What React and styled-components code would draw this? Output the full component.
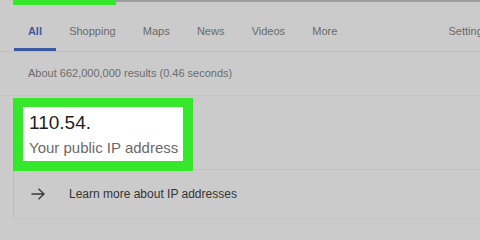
import React from "react";
import styled, { createGlobalStyle } from "styled-components";

const GlobalStyle = createGlobalStyle`
  html, body {
    margin: 0;
    padding: 0;
    background: #cbcbcb;
    overflow: hidden;
  }
  body {
    font-family: "Liberation Sans", Arial, sans-serif;
  }
`;

const Page = styled.div`
  width: 480px;
  height: 240px;
  background: #cbcbcb;
  overflow: hidden;
`;

const TopBar = styled.div`
  display: flex;
  height: 6px;
`;

const SearchHighlight = styled.div`
  margin-left: 13px;
  width: 103px;
  height: 5px;
  background: #35e82b;
`;

const SearchEdge = styled.div`
  flex: 1;
  height: 2px;
  background: #9d9d9d;
`;

const Tabs = styled.nav`
  display: flex;
  margin-top: 17px;
  padding-left: 14.3px;
  border-bottom: 1px solid #bfbfbf;
`;

const Tab = styled.div`
  padding: 0 13.6px 9px;
  font-size: 11px;
  line-height: 16px;
  color: ${({ $active }) => ($active ? "#3b5aa2" : "#6a6a6a")};
  font-weight: ${({ $active }) => ($active ? 700 : 400)};
  border-bottom: 3px solid ${({ $active }) => ($active ? "#3b5aa2" : "transparent")};
  white-space: nowrap;
  margin-left: ${({ $push }) => $push || 0};
`;

const Stats = styled.div`
  padding: 13px 0 0 28px;
  height: 30px;
  font-size: 11px;
  line-height: 16px;
  color: #6b6b6b;
  border-bottom: 1px solid #c2c2c2;
`;

const Card = styled.div`
  margin: 2px 0 0 13px;
  border-left: 1px solid #bdbdbd;
`;

const AnswerRow = styled.div`
  display: flex;
  height: 71px;
  border-bottom: 1px solid #c2c2c2;
`;

const Highlight = styled.div`
  margin-left: -1px;
  width: 160px;
  height: 54px;
  padding: 9px 10px 10px;
  background: #35e82b;
  position: relative;
  z-index: 1;
`;

const Answer = styled.div`
  box-sizing: border-box;
  height: 54px;
  background: #ffffff;
  padding: 5px 0 0 6px;
`;

const IpValue = styled.div`
  font-size: 19px;
  line-height: 22px;
  color: #1f1f1f;
`;

const IpLabel = styled.div`
  margin-top: 5px;
  font-size: 15px;
  line-height: 18px;
  color: #6a6a6a;
`;

const LinkRow = styled.div`
  display: flex;
  align-items: center;
  height: 48px;
  border-bottom: 1px solid #c4c4c4;
`;

const ArrowIcon = styled.svg`
  width: 14px;
  height: 12px;
  margin: 0 24px 0 17px;
`;

const LinkText = styled.span`
  font-size: 12px;
  line-height: 16px;
  color: #333333;
`;

const tabs = ["All", "Shopping", "Maps", "News", "Videos", "More"];

export default function App() {
  return (
    <Page>
      <GlobalStyle />
      <TopBar>
        <SearchHighlight />
        <SearchEdge />
      </TopBar>
      <Tabs>
        {tabs.map((t, i) => (
          <Tab key={t} $active={i === 0}>
            {t}
          </Tab>
        ))}
        <Tab $push="84px">Settings</Tab>
      </Tabs>
      <Stats>About 662,000,000 results (0.46 seconds)</Stats>
      <Card>
        <AnswerRow>
          <Highlight>
            <Answer>
              <IpValue>110.54.</IpValue>
              <IpLabel>Your public IP address</IpLabel>
            </Answer>
          </Highlight>
        </AnswerRow>
        <LinkRow>
          <ArrowIcon viewBox="0 0 14 12">
            <path
              d="M0.5 6 H13 M7.5 0.8 L13 6 L7.5 11.2"
              fill="none"
              stroke="#3a3a3a"
              strokeWidth="1.4"
            />
          </ArrowIcon>
          <LinkText>Learn more about IP addresses</LinkText>
        </LinkRow>
      </Card>
    </Page>
  );
}
